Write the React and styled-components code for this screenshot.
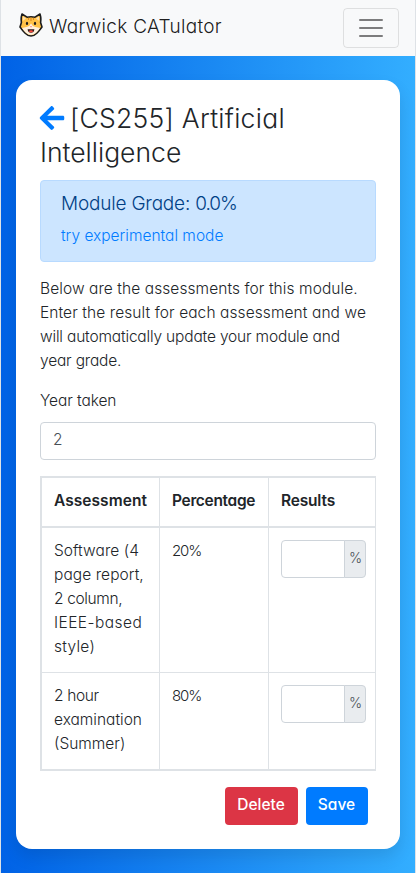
import React from "react";
import styled, { createGlobalStyle } from "styled-components";
import { FaArrowLeft } from "react-icons/fa";

const GlobalStyle = createGlobalStyle`
  *, *::before, *::after { box-sizing: border-box; }
  body {
    margin: 0;
    background: #dee2e6;
    color: #212529;
    font: 300 15.5px/24px Inter, "Liberation Sans", sans-serif;
    font-feature-settings: "cv11";
  }
  input, button { font: inherit; font-feature-settings: inherit; }
`;

const Page = styled.div`
  height: 873px;
  margin: 0 1px;
  overflow: hidden;
  background: linear-gradient(to right, #0062e6, #33aeff);
`;

const Navbar = styled.nav`
  display: flex;
  align-items: center;
  justify-content: space-between;
  height: 56px;
  padding: 0 16px 0 18px;
  background: #f8f9fa;
`;

const Brand = styled.a`
  display: flex;
  gap: 6px;
  color: rgba(0, 0, 0, 0.9);
  font-size: 19px;
  line-height: 30px;
  margin-top: -2px;
`;

const CatLogo = styled.svg`
  width: 24px;
  height: 24px;
  margin-top: 1px;
`;

const Toggler = styled.button`
  display: grid;
  place-items: center;
  width: 56px;
  height: 40px;
  padding: 0;
  border: 1px solid rgba(0, 0, 0, 0.1);
  border-radius: 4px;
  background: transparent;
`;

const Card = styled.main`
  margin: 24px 15px 0;
  height: 769px;
  padding: 22px 24px 0;
  border-radius: 16px;
  background: #fff;
  box-shadow: 0 8px 16px rgba(0, 0, 0, 0.1);
`;

const Title = styled.h1`
  margin: 0;
  height: 78px;
  font-size: 26.5px;
  font-weight: 300;
  line-height: 33.6px;
`;

const BackLink = styled.a`
  display: inline-block;
  height: 28px;
  margin: 0 4px 0 -2px;
  color: #007bff;
  line-height: 0;
  vertical-align: -4px;
`;

const Text = styled.span`
  letter-spacing: ${({ $ls = 0 }) => $ls}px;
  white-space: nowrap;
`;

const Figure = styled(Text)`
  font-size: 15px;
`;

const Alert = styled.section`
  height: 82px;
  padding: 11px 20px 0;
  border: 1px solid #b8daff;
  border-radius: 4px;
  background: #cce5ff;
`;

const Grade = styled.h2`
  margin: 0 0 8px;
  color: #004085;
  font-size: 19px;
  font-weight: 300;
  line-height: 24px;
`;

const ModeLink = styled.a`
  display: block;
  color: #007bff;
`;

const Intro = styled.p`
  display: flex;
  flex-direction: column;
  margin: 15px 0 16px;
`;

const Label = styled.label`
  display: block;
  margin-bottom: 9px;
`;

const Field = styled.input`
  display: block;
  width: 100%;
  height: 38px;
  padding: 3px 12px 7px;
  border: 1px solid #ced4da;
  border-radius: 4px;
  background: #fff;
  color: #495057;
  outline: none;
`;

const Table = styled.div`
  margin-top: 16px;
  border: 2px solid #dee2e6;
  border-right-width: 1px;
`;

const Row = styled.div`
  display: grid;
  grid-template-columns: 118px 109px 1fr;
  height: ${({ $h }) => $h}px;
  border-bottom: ${({ $line }) => $line}px solid #dee2e6;
  font-weight: ${({ $head }) => ($head ? 600 : 300)};
`;

const Cell = styled.div`
  display: flex;
  flex-direction: column;
  padding: 11px 0 0 12px;
  border-right: 1px solid #dee2e6;
  &:last-child { border-right: 0; }
`;

const ResultGroup = styled.div`
  display: grid;
  grid-template-columns: 64px 22px;
  width: 85px;
  margin-top: 1px;
`;

const ResultField = styled(Field)`
  border-radius: 4px 0 0 4px;
`;

const Unit = styled.span`
  width: 22px;
  height: 38px;
  margin-left: -1px;
  padding: 5px 0 0 4px;
  border: 1px solid #ced4da;
  border-radius: 0 4px 4px 0;
  background: #e9ecef;
  color: #495057;
  font-size: 14px;
`;

const Actions = styled.div`
  display: flex;
  justify-content: flex-end;
  gap: 8px;
  margin: 16px 8px 0 0;
`;

const Button = styled.button`
  width: ${({ $w }) => $w}px;
  height: 38px;
  padding: 0 1px 2px 0;
  border: 0;
  border-radius: 4px;
  background: ${({ $bg }) => $bg};
  color: #fff;
  font-weight: 500;
`;

function Cat() {
  return (
    <CatLogo viewBox="0 0 24 24" aria-hidden="true">
      <path d="M3 1 8 4.2Q12 3.4 16 4.2L21 1Q22.3 5 21.6 9.4L23 14Q20.5 17.5 17.8 20.2 15 23 12 23 9 23 6.2 20.2 3.5 17.5 1 14L2.4 9.4Q1.7 5 3 1Z" fill="#ffc247" stroke="#1c1c1c" strokeWidth="1.6" strokeLinejoin="round" />
      <path d="M12 10.5Q11 13.2 7.5 14L3 15Q7 21.8 12 21.9 17 21.8 21 15L16.5 14Q13 13.2 12 10.5Z" fill="#fff0dc" />
      <path d="M4 3.2 7 5.5 4 7.8ZM20 3.2 17 5.5 20 7.8Z" fill="#ffe0b0" />
      <path d="M12 4.5V8M9.5 4.8V7M14.5 4.8V7" stroke="#dd8a22" strokeWidth="1.1" />
      <ellipse cx="8" cy="10.4" rx="1.1" ry="1.7" fill="#1c1c1c" />
      <ellipse cx="16" cy="10.4" rx="1.1" ry="1.7" fill="#1c1c1c" />
      <path d="M10.8 13.2H13.2L12 14.5Z" fill="#f08080" />
      <path d="M8.6 16.2H15.4Q15 19.8 12 19.8 9 19.8 8.6 16.2Z" fill="#2a1717" />
      <path d="M9.6 18Q12 16.4 14.4 18 13.4 19.4 12 19.4 10.6 19.4 9.6 18Z" fill="#ff4a3d" />
    </CatLogo>
  );
}

const intro = [
  ["Below are the assessments for this module.", 0.08],
  ["Enter the result for each assessment and we", 0.09],
  ["will automatically update your module and", -0.17],
  ["year grade.", -0.18],
];

const headings = [["Assessment", 0.05], ["Percentage", -0.33], ["Results", -0.18]];

const assessments = [
  {
    name: [["Software (4", 0.05], ["page report,", 0.07], ["2 column,", -0.35], ["IEEE-based", 0.45], ["style)", 0.28]],
    weight: "20%", height: 145, line: 1,
  },
  {
    name: [["2 hour", -0.36], ["examination", 0], ["(Summer)", 0]],
    weight: "80%", height: 96, line: 0,
  },
];

export default function App() {
  return (
    <>
      <GlobalStyle />
      <Page>
        <Navbar>
          <Brand><Cat /><Text $ls={0.3}>Warwick CATulator</Text></Brand>
          <Toggler aria-label="Toggle navigation">
            <svg width="30" height="30" viewBox="0 0 30 30" stroke="rgba(0,0,0,.5)" strokeWidth="2" strokeLinecap="round" strokeMiterlimit="10">
              <path d="M4 7h22M4 15h22M4 23h22" />
            </svg>
          </Toggler>
        </Navbar>
        <Card>
          <Title>
            <BackLink aria-label="Back"><FaArrowLeft size={28} /></BackLink>
            <Text $ls={0.27}>[CS255] Artificial</Text><br />
            <Text>Intelligence</Text>
          </Title>
          <Alert>
            <Grade><Text $ls={-0.2}>Module Grade: </Text><Text $ls={-1.05}>0.0%</Text></Grade>
            <ModeLink><Text>try experimental mode</Text></ModeLink>
          </Alert>
          <Intro>{intro.map(([t, ls]) => <Text key={t} $ls={ls}>{t}</Text>)}</Intro>
          <Label htmlFor="year"><Text $ls={-0.08}>Year taken</Text></Label>
          <Field id="year" defaultValue="2" />
          <Table>
            <Row $h={50} $line={2} $head>
              {headings.map(([t, ls]) => <Cell key={t}><Text $ls={ls}>{t}</Text></Cell>)}
            </Row>
            {assessments.map((a) => (
              <Row key={a.weight} $h={a.height} $line={a.line}>
                <Cell>{a.name.map(([t, ls]) => <Text key={t} $ls={ls}>{t}</Text>)}</Cell>
                <Cell><Figure $ls={-1.1}>{a.weight}</Figure></Cell>
                <Cell>
                  <ResultGroup><ResultField aria-label="Result" /><Unit>%</Unit></ResultGroup>
                </Cell>
              </Row>
            ))}
          </Table>
          <Actions>
            <Button $w={73} $bg="#dc3545">Delete</Button>
            <Button $w={62} $bg="#007bff">Save</Button>
          </Actions>
        </Card>
      </Page>
    </>
  );
}
